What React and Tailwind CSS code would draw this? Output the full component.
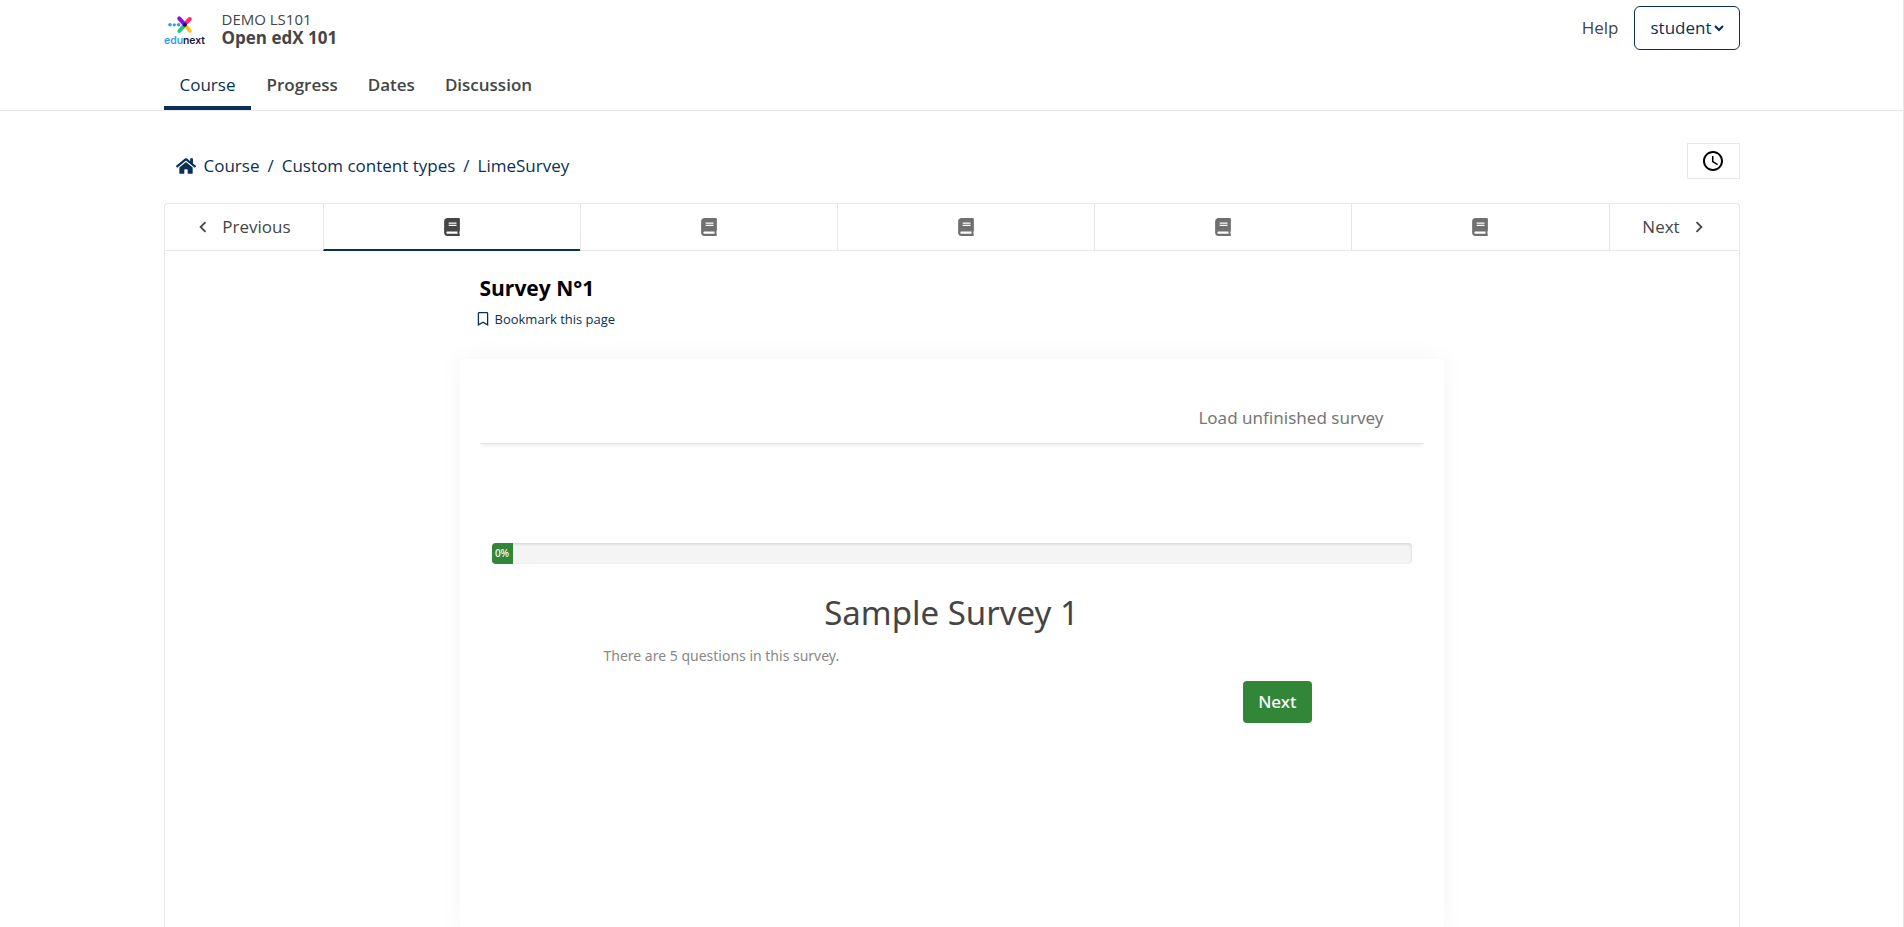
import React from "react";
import { FaHome, FaBook, FaRegBookmark } from "react-icons/fa";
import { MdAccessTime, MdChevronLeft, MdChevronRight } from "react-icons/md";

const tabs = ["Course", "Progress", "Dates", "Discussion"];
const crumbs = ["Course", "Custom content types", "LimeSurvey"];
const units = [1, 2, 3, 4, 5];

function Logo() {
  return (
    <svg viewBox="0 0 42 32" className="h-8 w-[42px]" role="img" aria-label="edunext">
      <g strokeLinecap="round" strokeWidth="4" fill="none">
        <path d="M25.8 5 22 8.8" stroke="#fb2c6b" />
        <path d="M22.4 12.8 25.8 16.8" stroke="#fcc51d" />
        <path d="M19.3 12.6 15.4 17" stroke="#0fd07e" />
        <path d="M15.2 4.4 20.6 10.4" stroke="#8a0bf5" />
      </g>
      <circle cx="20.9" cy="10.8" r="2" fill="#1b1240" />
      <g fill="#2f9cf4">
        <circle cx="6" cy="10.8" r="1.8" />
        <circle cx="10.3" cy="10.8" r="1.6" />
        <circle cx="14.6" cy="10.8" r="1.8" />
      </g>
      <text x="0" y="30" fontFamily="Inter, sans-serif" fontSize="10.4" fontWeight="600" fill="#1b1240">
        <tspan fill="#2f9cf4">edu</tspan>next
      </text>
    </svg>
  );
}

function Header() {
  return (
    <header className="border-b border-[#e7e7e7]">
      <div className="mx-auto max-w-[1576px]">
        <div className="flex h-[56px] items-center">
          <a href="#home" className="mr-4 pt-1"><Logo /></a>
          <div className="flex-1">
            <span className="block text-[15px] leading-5">DEMO LS101</span>
            <span className="block text-[17px] leading-[18px] font-bold">Open edX 101</span>
          </div>
          <a href="#help" className="mr-4">Help</a>
          <button type="button" className="flex h-11 items-center gap-[2px] rounded-md border border-[#0a3055] px-[15px] text-[#0a3055]">
            student
            <svg viewBox="0 0 10 7" className="h-[7px] w-[10px]" fill="none" stroke="currentColor" strokeWidth="2.2" aria-hidden="true">
              <path d="M1 1l4 4 4-4" />
            </svg>
          </button>
        </div>
        <nav className="flex">
          {tabs.map((t, i) => (
            <a
              key={t}
              href={"#" + t.toLowerCase()}
              className={
                i === 0
                  ? "h-[54px] border-b-4 border-[#0a3055] px-4 pt-[17px] text-[#0a3055]"
                  : "h-[54px] px-[15px] pt-[17px] font-semibold"
              }
            >
              {t}
            </a>
          ))}
        </nav>
      </div>
    </header>
  );
}

function Breadcrumbs() {
  return (
    <div className="flex h-[92px] items-start justify-between pt-8">
      <nav className="flex items-center pt-[11px] pl-3 text-[#0a3055]" aria-label="Breadcrumb">
        <FaHome className="mr-2 size-5" />
        {crumbs.map((c, i) => (
          <React.Fragment key={c}>
            {i > 0 && <span className="px-2">/</span>}
            <a href={"#crumb-" + i}>{c}</a>
          </React.Fragment>
        ))}
      </nav>
      <button type="button" aria-label="Show deadlines" className="flex h-9 w-[53px] items-center justify-center border border-[#e7e7e7] text-black">
        <MdAccessTime className="size-6" />
      </button>
    </div>
  );
}

function SequenceNav() {
  return (
    <div className="flex h-[47px]">
      <button type="button" className="flex w-[158px] items-center justify-center gap-2 border-b border-[#e7e7e7] pr-1">
        <MdChevronLeft className="size-[22px]" />
        Previous
      </button>
      {units.map((u) => (
        <button
          key={u}
          type="button"
          aria-label={"Unit " + u}
          className={
            u === 1
              ? "flex flex-1 items-center justify-center border-b-2 border-l border-b-[#0a3055] border-l-[#e7e7e7] text-[#454545]"
              : "flex flex-1 items-center justify-center border-b border-l border-[#e7e7e7] text-[#707070]"
          }
        >
          <FaBook className="size-[18px]" />
        </button>
      ))}
      <button type="button" className="flex w-[130px] items-center justify-center gap-2 border-b border-l border-[#e7e7e7] pl-1">
        Next
        <MdChevronRight className="size-[22px]" />
      </button>
    </div>
  );
}

function Survey() {
  return (
    <section className="mt-7 flex-1 rounded-sm px-5 pt-[47px] font-['Noto_Sans',sans-serif] shadow-[0_0_24px_rgba(0,0,0,0.05)]">
      <div className="flex h-[38px] justify-end border-b border-[#dee2e6] pr-10 text-[#777777] shadow-[0_4px_3px_-2px_rgba(222,226,230,0.5)]">
        <a href="#load">Load unfinished survey</a>
      </div>
      <div className="px-3 pt-[99px]">
        <div className="h-[21px] overflow-hidden rounded-sm bg-[#f4f4f4] shadow-[inset_0_1px_3px_rgba(0,0,0,0.15)]">
          <div className="h-full w-[21px] bg-[#328637] text-center text-[10px] leading-[21px] font-medium text-white">0%</div>
        </div>
      </div>
      <h2 className="pt-7 text-center text-[33px] leading-[42px]">Sample Survey 1</h2>
      <div className="pr-28 pl-[124px]">
        <p className="mt-3 text-[14px] leading-5 text-[#888888]">There are 5 questions in this survey.</p>
        <div className="mt-[15px] flex justify-end">
          <button type="button" className="h-[42px] rounded bg-[#328637] px-[15px] font-medium text-white">Next</button>
        </div>
      </div>
    </section>
  );
}

export default function App() {
  return (
    <div className="flex min-h-screen flex-col border-r border-[#e7e7e7] bg-white font-['Open_Sans',sans-serif] text-[17px] leading-6 text-[#454545]">
      <Header />
      <main className="mx-auto flex w-full max-w-[1576px] flex-1 flex-col">
        <Breadcrumbs />
        <div className="flex flex-1 flex-col rounded-t border border-b-0 border-[#e7e7e7]">
          <SequenceNav />
          <div className="mx-auto flex w-full max-w-[984px] flex-1 flex-col">
            <h1 className="px-5 pt-[23px] text-[21px] leading-7 font-bold text-black">Survey N°1</h1>
            <button type="button" className="mx-4 mt-[5px] flex items-center gap-[5px] self-start text-[13px] text-[#0a3055]">
              <FaRegBookmark className="size-[14px]" />
              Bookmark this page
            </button>
            <Survey />
          </div>
        </div>
      </main>
    </div>
  );
}
